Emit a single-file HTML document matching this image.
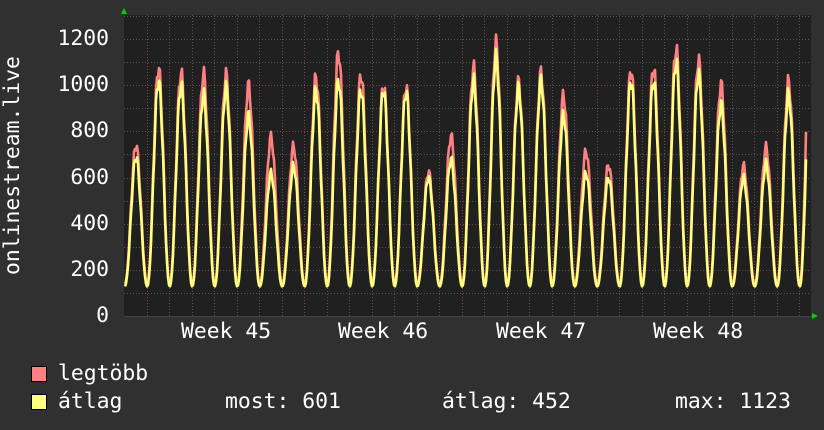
<!DOCTYPE html>
<html><head><meta charset="utf-8">
<style>
html,body{margin:0;padding:0;background:#303030;}
body{width:824px;height:430px;overflow:hidden;position:relative;font-family:"DejaVu Sans Mono","Liberation Mono",monospace;color:#fff;}
.t{position:absolute;font-size:21.4px;line-height:20px;white-space:pre;}
.n{position:absolute;left:40px;width:69px;text-align:right;font-size:21.4px;line-height:20px;}
.box{position:absolute;width:14px;height:14px;border:1px solid #000;}
</style></head><body>
<svg id="g" width="824" height="430" style="position:absolute;left:0;top:0"></svg>
<div class="n" style="top:29px">1200</div>
<div class="n" style="top:75px">1000</div>
<div class="n" style="top:121px">800</div>
<div class="n" style="top:168px">600</div>
<div class="n" style="top:214px">400</div>
<div class="n" style="top:260px">200</div>
<div class="n" style="top:306px">0</div>
<div class="t" style="left:181px;top:322px">Week 45</div>
<div class="t" style="left:338px;top:322px">Week 46</div>
<div class="t" style="left:496px;top:322px">Week 47</div>
<div class="t" style="left:653px;top:322px">Week 48</div>
<div class="t" style="left:3px;top:275px;transform-origin:0 0;transform:rotate(-90deg)">onlinestream.live</div>
<div class="box" style="left:31px;top:366px;background:#ff8080"></div>
<div class="box" style="left:31px;top:394px;background:#ffff80"></div>
<div class="t" style="left:58px;top:364px">legtöbb</div>
<div class="t" style="left:58px;top:392px">átlag</div>
<div class="t" style="left:225px;top:392px">most: 601</div>
<div class="t" style="left:442px;top:392px">átlag: 452</div>
<div class="t" style="left:675px;top:392px">max: 1123</div>
<script>
var s='';
var L=124,R=811,T=15,B=316;
s+='<rect x="'+L+'" y="'+T+'" width="'+(R-L)+'" height="'+(B-T)+'" fill="#202020"/>';
var py=function(v){return B-v*(277/1200);};
for(var v=100;v<=1300;v+=100){var y=Math.round(py(v))+0.5;if(y<T)continue;
 s+='<line x1="'+L+'" x2="'+R+'" y1="'+y+'" y2="'+y+'" stroke="'+(v%200==0?'#7a4545':'#555')+'" stroke-dasharray="1,2"/>';}
for(var x=146.5;x<R;x+=22.5){var xx=Math.round(x)+0.5;var maj=[146,304,461,619,776].some(function(m){return Math.abs(m-xx)<3;});
 s+='<line x1="'+xx+'" x2="'+xx+'" y1="'+T+'" y2="'+B+'" stroke="'+(maj?'#7a4545':'#555')+'" stroke-dasharray="1,2"/>';}
var pk=[690,1020,1000,960,990,870,620,650,980,1020,980,980,970,600,680,1020,1120,990,1020,870,620,600,1020,1020,1100,1050,920,600,660,960,1100];
var rk=[740,1075,1055,1050,1045,1000,775,735,1035,1140,1045,1000,995,625,780,1075,1180,1015,1055,955,715,655,1065,1075,1160,1110,1005,650,730,1015,1300];
function val(x,arr,base){var t=(x-136)/22.5;var i=Math.round(t);var ph=t-i;if(i<0)i=0;if(i>=arr.length)i=arr.length-1;
 var c=0.5+0.5*Math.cos(2*Math.PI*ph);var w=Math.sin(x*1.7)*0.04;return base+(arr[i]-base)*Math.max(0,Math.pow(c,1.1)+w*c);}
function line(arr,base,col){var p=[];for(var x=L+1;x<=R-5;x++){var v=val(x,arr,base);p.push(x+','+py(v).toFixed(1));}
 return '<polyline points="'+p.join(' ')+'" fill="none" stroke="'+col+'" stroke-width="2.6" stroke-linejoin="round"/>';}
s+=line(rk,140,'#ff8080');
s+=line(pk,128,'#ffff80');
s+='<line x1="'+L+'" x2="'+(R+4)+'" y1="'+(B+0.5)+'" y2="'+(B+0.5)+'" stroke="#444"/>';
s+='<polygon points="121,14 127,14 124,8" fill="#00d000"/>';
s+='<polygon points="812,313 812,319 818,316" fill="#00d000"/>';
document.getElementById('g').innerHTML=s;
</script>
</body></html>
